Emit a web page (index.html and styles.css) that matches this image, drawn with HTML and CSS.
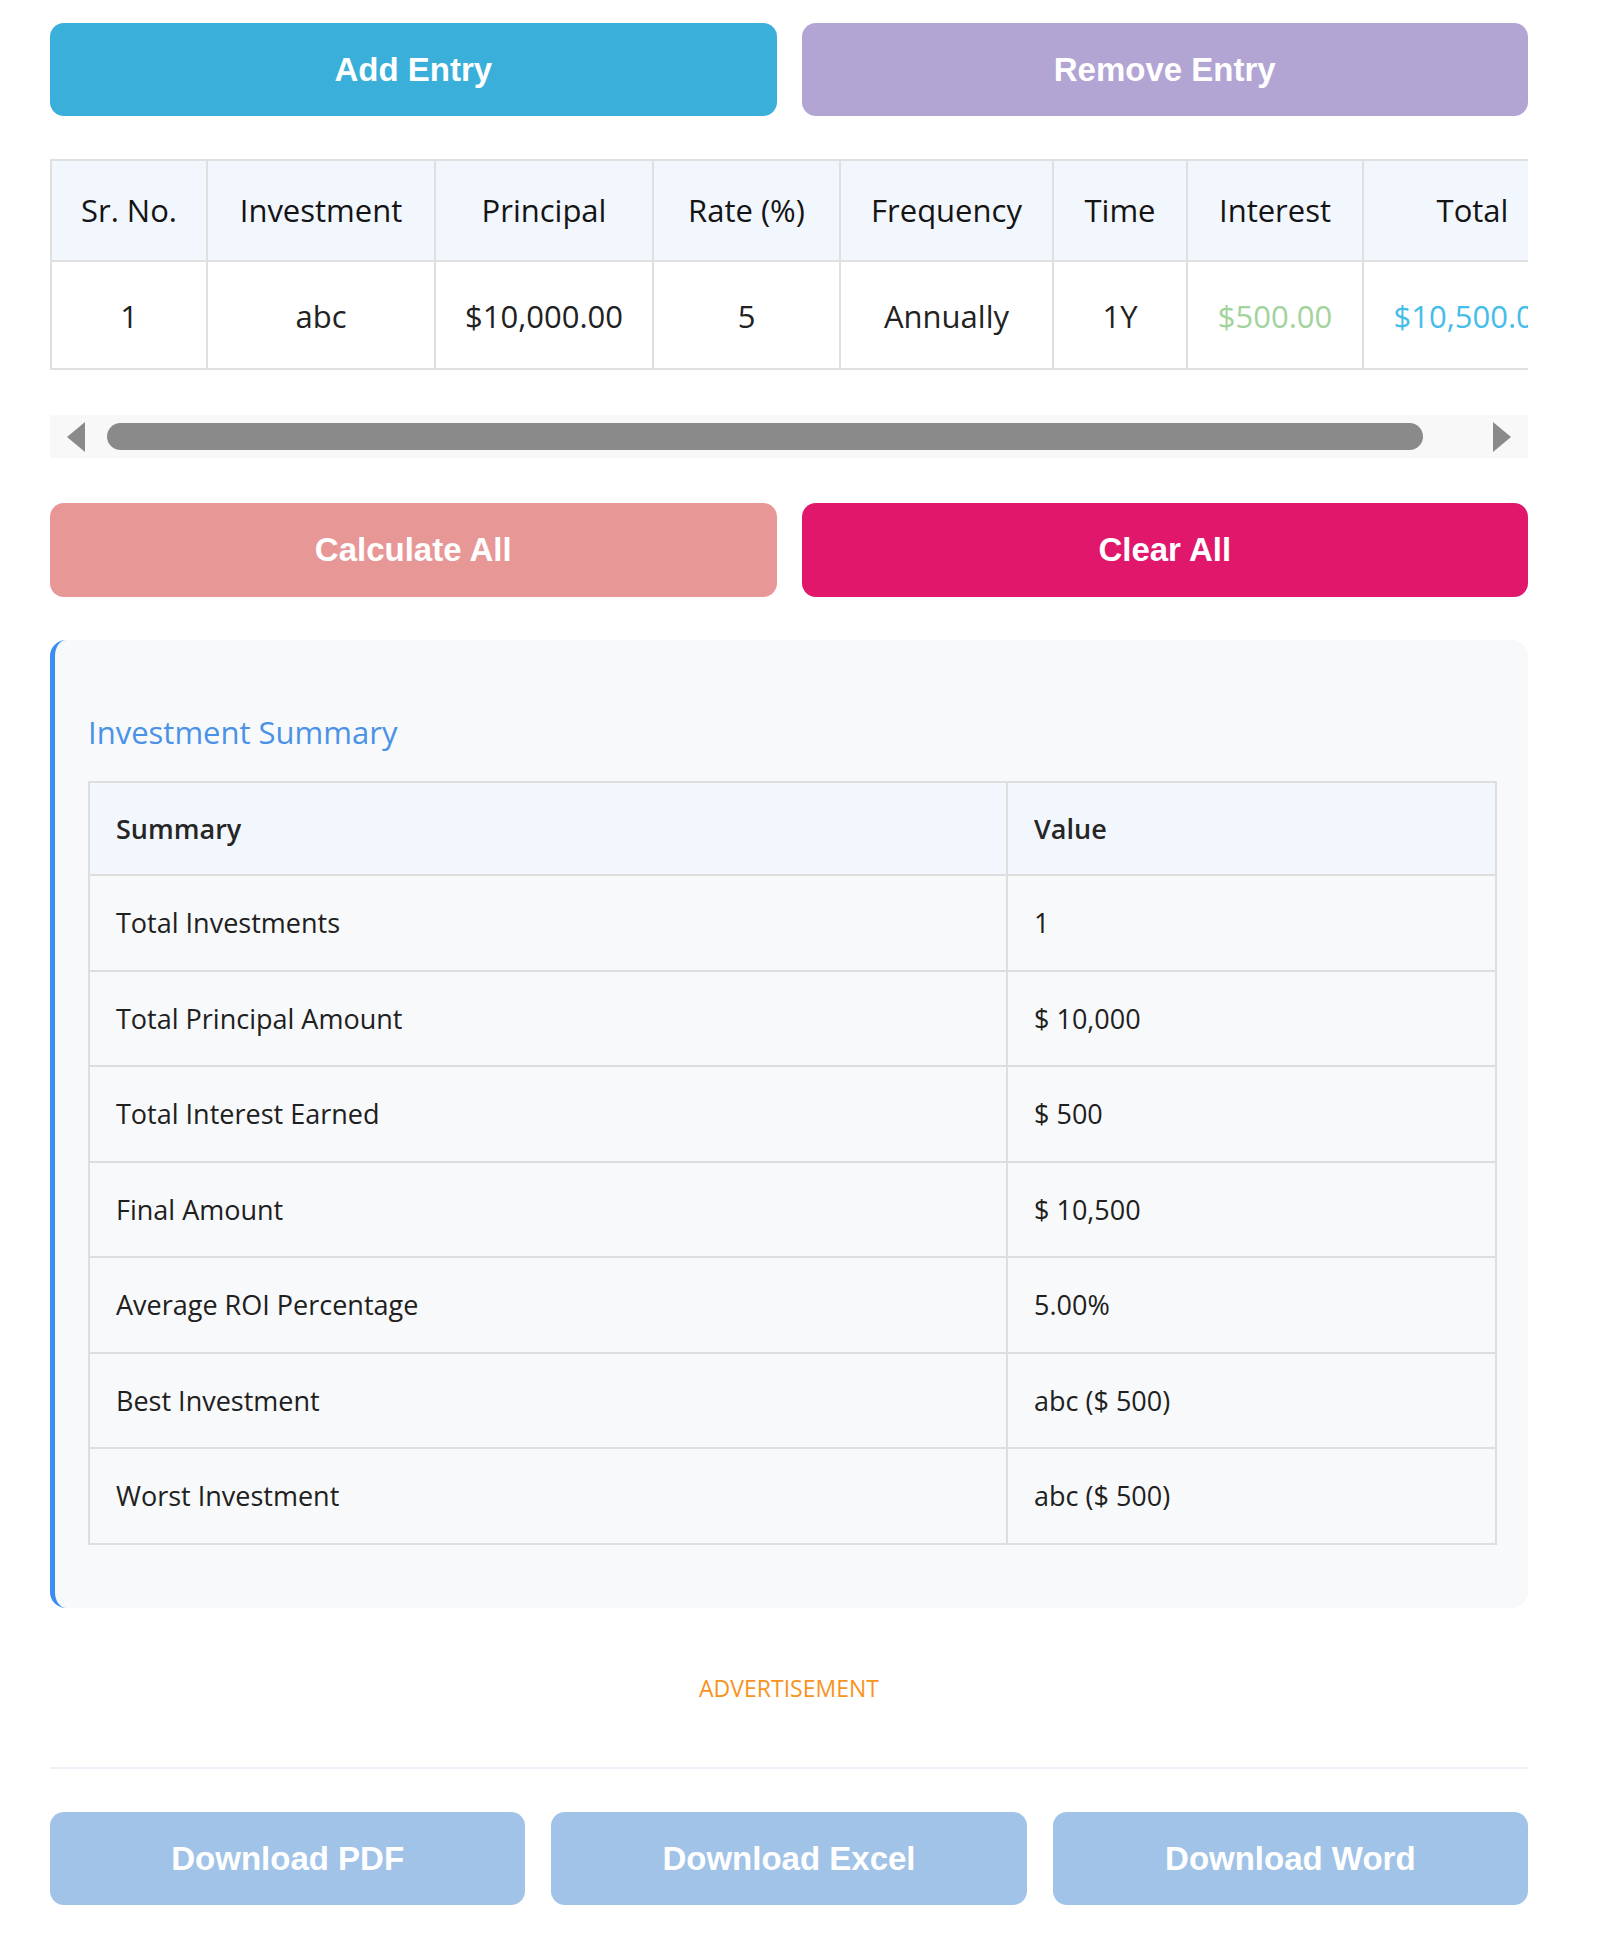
FILE: index.html
```html
<!DOCTYPE html>
<html lang="en">
<head>
<meta charset="utf-8">
<title>Investment Calculator</title>
<link rel="stylesheet" href="styles.css">
</head>
<body>
<div class="page">
  <div class="btn-row">
    <button class="btn btn-add">Add Entry</button>
    <button class="btn btn-remove">Remove Entry</button>
  </div>

  <div class="table-scroll">
    <table class="entries">
      <colgroup>
        <col class="c-sr">
        <col class="c-inv">
        <col class="c-prin">
        <col class="c-rate">
        <col class="c-freq">
        <col class="c-time">
        <col class="c-int">
        <col class="c-total">
      </colgroup>
      <thead>
        <tr>
          <th>Sr. No.</th>
          <th>Investment</th>
          <th>Principal</th>
          <th>Rate (%)</th>
          <th>Frequency</th>
          <th>Time</th>
          <th>Interest</th>
          <th>Total</th>
        </tr>
      </thead>
      <tbody>
        <tr>
          <td>1</td>
          <td>abc</td>
          <td>$10,000.00</td>
          <td>5</td>
          <td>Annually</td>
          <td>1Y</td>
          <td class="interest">$500.00</td>
          <td class="total">$10,500.00</td>
        </tr>
      </tbody>
    </table>
  </div>

  <div class="hscroll">
    <span class="arrow arrow-left"></span>
    <span class="thumb"></span>
    <span class="arrow arrow-right"></span>
  </div>

  <div class="btn-row btn-row-mid">
    <button class="btn btn-calc">Calculate All</button>
    <button class="btn btn-clear">Clear All</button>
  </div>

  <section class="summary-card">
    <h3 class="summary-title">Investment Summary</h3>
    <table class="summary">
      <colgroup>
        <col class="col-label">
        <col class="col-value">
      </colgroup>
      <thead>
        <tr><th>Summary</th><th>Value</th></tr>
      </thead>
      <tbody>
        <tr><td>Total Investments</td><td>1</td></tr>
        <tr><td>Total Principal Amount</td><td>$ 10,000</td></tr>
        <tr><td>Total Interest Earned</td><td>$ 500</td></tr>
        <tr><td>Final Amount</td><td>$ 10,500</td></tr>
        <tr><td>Average ROI Percentage</td><td>5.00%</td></tr>
        <tr><td>Best Investment</td><td>abc ($ 500)</td></tr>
        <tr><td>Worst Investment</td><td>abc ($ 500)</td></tr>
      </tbody>
    </table>
  </section>

  <div class="ad">ADVERTISEMENT</div>

  <div class="btn-row btn-row-dl">
    <button class="btn btn-dl">Download PDF</button>
    <button class="btn btn-dl">Download Excel</button>
    <button class="btn btn-dl">Download Word</button>
  </div>
</div>
</body>
</html>
```

FILE: styles.css
```css
html, body {
  margin: 0;
  padding: 0;
  background: #ffffff;
}

body {
  font-family: "Open Sans", "Noto Sans", sans-serif;
  color: #1e1e1e;
}

.page {
  width: 1478px;
  margin-left: 50px;
  padding-top: 23px;
}

/* Buttons */
.btn-row {
  display: flex;
  gap: 25px;
}

.btn {
  flex: 1;
  height: 93px;
  border: none;
  border-radius: 14px;
  font-family: "Liberation Sans", Arial, sans-serif;
  font-weight: bold;
  font-size: 33px;
  color: #ffffff;
  padding: 0;
  cursor: pointer;
}

.btn-add { background: #3aafda; }
.btn-remove { background: #b2a5d4; }
.btn-calc { background: #e89797; }
.btn-clear { background: #e0176b; }
.btn-dl { background: #a1c3e7; }

.btn-row-mid {
  margin-top: 45px;
}
.btn-row-mid .btn { height: 94px; }

/* Entries table */
.table-scroll {
  margin-top: 43px;
  width: 1478px;
  overflow: hidden;
}

.entries {
  width: 1531px;
  table-layout: fixed;
  border-collapse: collapse;
  font-size: 31px;
  line-height: 42px;
  white-space: nowrap;
}

.c-sr { width: 156px; }
.c-inv { width: 228px; }
.c-prin { width: 218px; }
.c-rate { width: 187px; }
.c-freq { width: 213px; }
.c-time { width: 134px; }
.c-int { width: 176px; }
.c-total { width: 219px; }

.entries th,
.entries td {
  border: 2px solid #e0e0e0;
  text-align: center;
  padding: 0 20px;
  overflow: hidden;
}

.entries th {
  background: #f2f6fd;
  font-weight: 400;
  color: #141414;
  padding-top: 28px;
  padding-bottom: 29px;
}

.entries td {
  background: #ffffff;
  color: #222222;
  padding-top: 33px;
  padding-bottom: 31px;
}

.entries td.interest { color: #a3d39c; }
.entries td.total { color: #45bdea; }

/* Fake horizontal scrollbar */
.hscroll {
  margin-top: 45px;
  height: 43px;
  background: #f8f8f8;
  display: flex;
  align-items: center;
  padding: 0 17px;
}

.arrow {
  width: 0;
  height: 0;
  border-top: 15px solid transparent;
  border-bottom: 15px solid transparent;
}

.arrow-left {
  border-right: 18px solid #8a8a8a;
}

.arrow-right {
  border-left: 18px solid #8a8a8a;
  margin-left: auto;
}

.thumb {
  margin-left: 22px;
  width: 1316px;
  height: 27px;
  border-radius: 14px;
  background: #8a8a8a;
}

/* Summary card */
.summary-card {
  margin-top: 43px;
  background: #f8f9fa;
  border-left: 5px solid #3b8ef0;
  border-radius: 16px;
  padding: 71px 31px 63px 33px;
}

.summary-title {
  margin: 0 0 28px 0;
  font-size: 31px;
  line-height: 42px;
  font-weight: 400;
  color: #4a92e8;
}

.summary {
  width: 100%;
  border-collapse: collapse;
  table-layout: fixed;
  font-size: 27px;
  line-height: 37px;
}

.col-label { width: 918px; }
.col-value { width: auto; }

.summary th,
.summary td {
  border: 2px solid #dedede;
  text-align: left;
  padding: 28px 26px 29px;
  color: #202020;
}

.summary tbody tr:nth-child(even) td {
  padding-bottom: 28px;
}

.summary th {
  background: #f2f6fd;
  font-weight: 600;
  color: #262626;
  padding-top: 27px;
  padding-bottom: 27px;
}

.summary td {
  background: #f8f9fa;
}

/* Advertisement */
.ad {
  height: 159px;
  display: flex;
  align-items: center;
  justify-content: center;
  font-size: 23px;
  color: #f7931e;
  border-bottom: 2px solid #eef1f7;
}

.btn-row-dl {
  margin-top: 43px;
  gap: 26px;
}
```
